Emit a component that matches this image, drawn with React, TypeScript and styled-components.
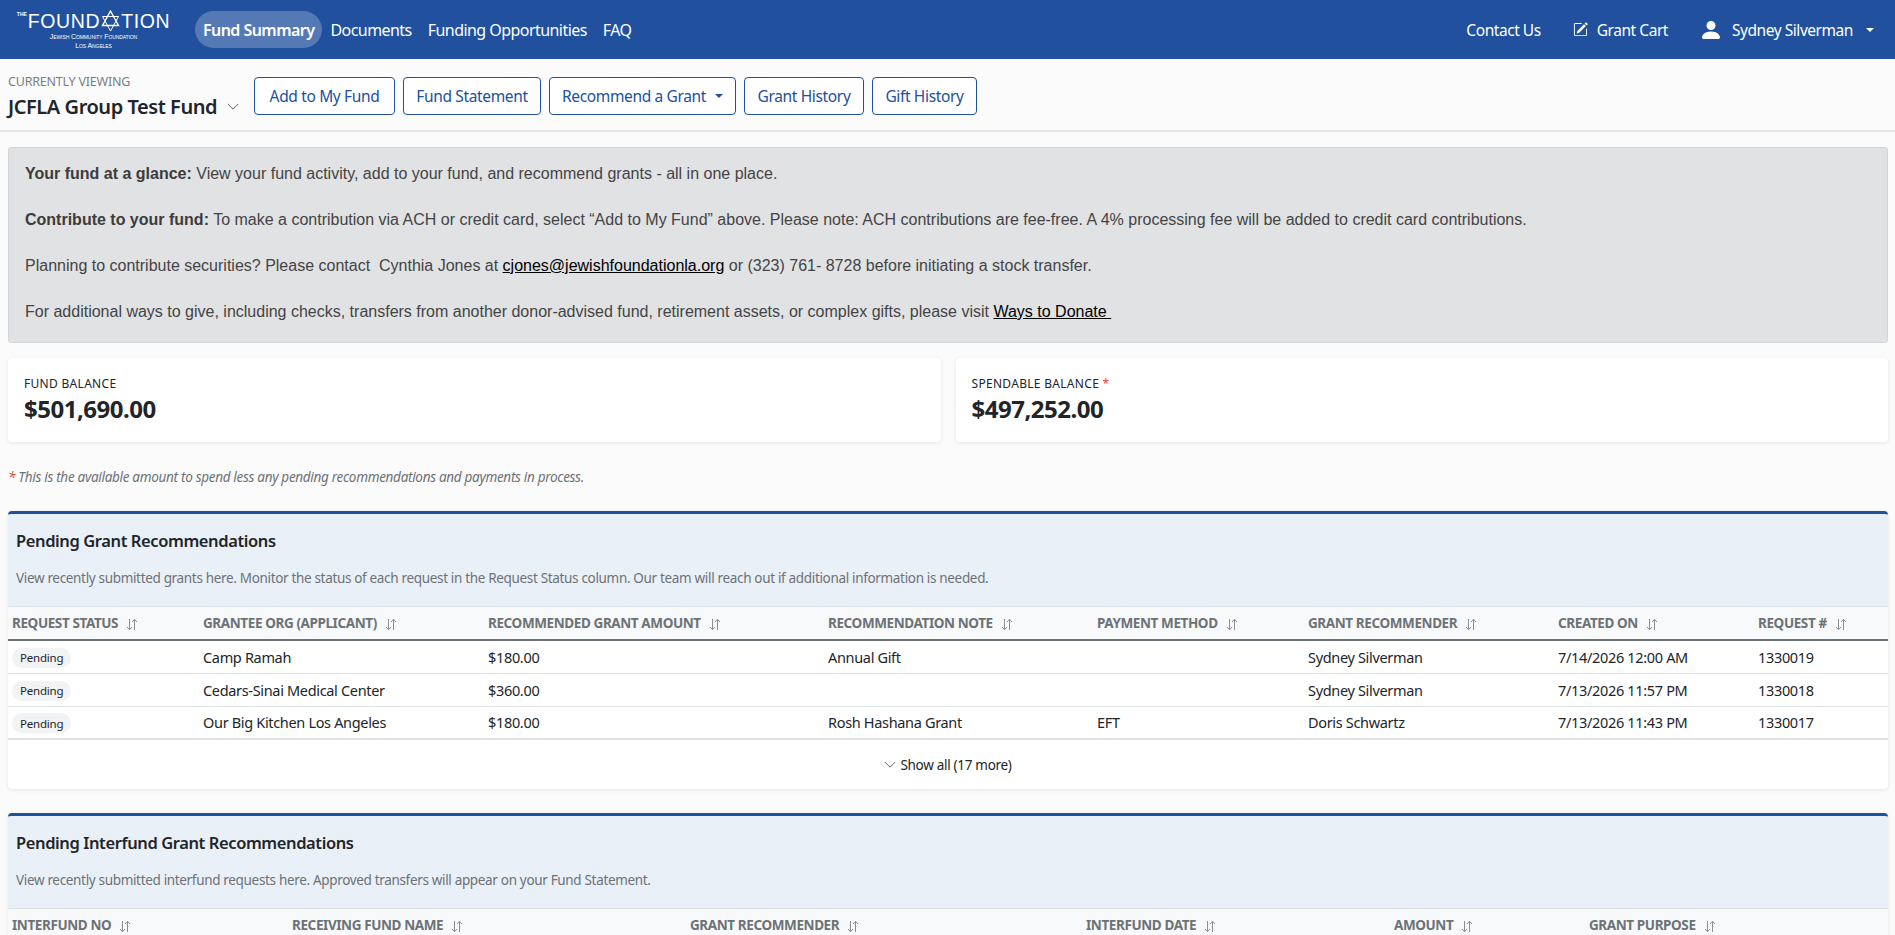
import React from "react";
import styled, { createGlobalStyle } from "styled-components";
import { BsPencilSquare, BsPersonFill } from "react-icons/bs";

const BLUE = "#20509e";
const UI_FONT = `"Noto Sans", "Open Sans", sans-serif`;

const GlobalStyle = createGlobalStyle`
  html, body {
    margin: 0;
    padding: 0;
    height: 100%;
    overflow: hidden;
    background: #fbfbfb;
    color: #212529;
    font-family: ${UI_FONT};
  }
  * { box-sizing: border-box; }
`;

const Page = styled.div`
  height: 935px;
  overflow: hidden;
`;

/* top nav */
const Header = styled.header`
  height: 59px;
  background: ${BLUE};
  display: flex;
  align-items: center;
  padding: 0 21px 0 15px;
  color: #fff;
`;
const Logo = styled.div`
  width: 157px;
  height: 50px;
  margin-right: 23px;
  display: flex;
  flex-direction: column;
  align-items: center;
  font-family: "Liberation Sans", sans-serif;
`;
const LogoMain = styled.div`
  display: flex;
  align-items: center;
  height: 22px;
  margin-top: 5px;
  font-size: 19.5px;
  letter-spacing: 0.6px;
  line-height: 22px;
  sup {
    font-size: 5px;
    font-weight: 700;
    align-self: flex-start;
    line-height: 8px;
    letter-spacing: 0;
    margin-right: 1px;
  }
`;
const LogoSub = styled.div`
  font-size: 7px;
  line-height: 9px;
  letter-spacing: -0.1px;
  font-variant: small-caps;
  &:first-of-type { margin-top: 5px; }
`;
const NavLink = styled.a<{ $active?: boolean }>`
  display: flex;
  align-items: center;
  height: 37px;
  padding: 0 ${({ $active }) => ($active ? "8px" : "8px")};
  border-radius: 19px;
  font-size: 16px;
  letter-spacing: -0.55px;
  white-space: nowrap;
  font-weight: ${({ $active }) => ($active ? 600 : 400)};
  background: ${({ $active }) => ($active ? "rgba(255,255,255,0.24)" : "transparent")};
`;
const Spacer = styled.div`
  flex: 1;
`;
const RightLink = styled.a<{ $gap: number }>`
  display: flex;
  align-items: center;
  gap: 9px;
  margin-left: ${({ $gap }) => $gap}px;
  font-size: 15.5px;
  letter-spacing: -0.45px;
  white-space: nowrap;
`;
const Caret = styled.span<{ $color?: string }>`
  display: inline-block;
  width: 0;
  height: 0;
  border-left: 4.5px solid transparent;
  border-right: 4.5px solid transparent;
  border-top: 4.5px solid ${({ $color }) => $color || "#fff"};
`;

/* fund bar */
const FundBar = styled.div`
  height: 73px;
  border-bottom: 2px solid #e4e5e6;
  display: flex;
  align-items: flex-start;
  padding: 0 8px;
`;
const FundPicker = styled.div`
  width: 246px;
  padding-top: 14px;
`;
const Viewing = styled.div`
  font-size: 12.5px;
  line-height: 17px;
  color: #7a7f85;
  letter-spacing: -0.2px;
`;
const FundName = styled.div`
  display: flex;
  align-items: center;
  gap: 10px;
  font-size: 20px;
  font-weight: 600;
  line-height: 28px;
  margin-top: 3px;
  letter-spacing: -0.45px;
  color: #212529;
`;
const Actions = styled.div`
  display: flex;
  gap: 8px;
  padding-top: 18px;
`;
const ActionButton = styled.button<{ $width: number }>`
  width: ${({ $width }) => $width}px;
  height: 38px;
  display: flex;
  align-items: center;
  justify-content: center;
  gap: 9px;
  background: #fff;
  border: 1px solid ${BLUE};
  border-radius: 4px;
  color: ${BLUE};
  font-family: ${UI_FONT};
  font-size: 15.5px;
  letter-spacing: -0.35px;
  white-space: nowrap;
  padding: 0;
`;

/* content */
const Content = styled.main`
  padding: 15px 7px 0 8px;
`;
const InfoPanel = styled.section`
  height: 196px;
  background: #e1e2e4;
  border: 1px solid #d3d5d8;
  border-radius: 3px;
  padding: 14px 16px 0;
  font-family: "Liberation Sans", Arial, sans-serif;
  font-size: 16px;
  color: #444;
  p {
    margin: 0 0 22px;
    line-height: 24px;
  }
  strong { font-weight: 700; color: #3c3c3c; }
  a { color: #000; text-decoration: underline; }
`;
const Cards = styled.div`
  display: grid;
  grid-template-columns: 1fr 1fr;
  gap: 15px;
  margin-top: 15px;
`;
const BalanceCard = styled.div`
  height: 84px;
  background: #fff;
  border-radius: 4px;
  box-shadow: 0 1px 4px rgba(0, 0, 0, 0.09);
  padding: 17px 16px;
`;
const CardLabel = styled.div`
  font-size: 12px;
  line-height: 17px;
  letter-spacing: 0.3px;
  color: #212529;
  span { color: #d9453b; }
`;
const CardValue = styled.div`
  font-size: 24px;
  line-height: 32px;
  margin-top: 1px;
  font-weight: 700;
  letter-spacing: -0.5px;
`;
const Footnote = styled.div`
  margin: 25px 0 0;
  font-size: 13.5px;
  line-height: 20px;
  font-style: italic;
  color: #6d7277;
  letter-spacing: -0.3px;
  span { color: #d9453b; }
`;
const TableCard = styled.section<{ $top: number }>`
  margin-top: ${({ $top }) => $top}px;
  background: #fff;
  border-radius: 4px;
  box-shadow: 0 1px 4px rgba(0, 0, 0, 0.09);
`;
const TableHeader = styled.div`
  height: 96px;
  background: #e9f0f8;
  border-top: 3px solid ${BLUE};
  border-radius: 4px 4px 0 0;
  padding: 14px 8px 0;
  border-bottom: 1px solid #dfe3e7;
`;
const TableTitle = styled.h2`
  margin: 0;
  font-size: 16.5px;
  line-height: 26px;
  font-weight: 600;
  letter-spacing: -0.4px;
  color: #212529;
`;
const TableDesc = styled.p`
  margin: 14px 0 0;
  font-size: 13.5px;
  line-height: 20px;
  letter-spacing: -0.33px;
  color: #6d7277;
`;
const Table = styled.table`
  width: 100%;
  table-layout: fixed;
  border-collapse: collapse;
`;
const HeadRow = styled.tr`
  height: 33px;
  background: #f7f9fa;
  border-bottom: 2px solid #6d7277;
`;
const HeadCell = styled.th`
  padding: 0 4px;
  text-align: left;
  font-size: 13.5px;
  font-weight: 700;
  color: #6d7277;
  letter-spacing: -0.4px;
  white-space: nowrap;
  svg {
    margin-left: 8px;
    vertical-align: -3px;
  }
`;
const BodyRow = styled.tr`
  height: 33px;
  border-bottom: 1px solid #dfe3e7;
  &:last-child { border-bottom: 2px solid #dfe3e7; }
`;
const Cell = styled.td`
  padding: 0 4px;
  font-size: 14.5px;
  letter-spacing: -0.33px;
  color: #212529;
  white-space: nowrap;
`;
const StatusChip = styled.span`
  display: inline-flex;
  align-items: center;
  height: 20px;
  padding: 0 8px;
  border-radius: 10px;
  background: #f1f3f5;
  font-size: 11.5px;
  letter-spacing: -0.2px;
  vertical-align: middle;
`;
const TableFooter = styled.div`
  height: 49px;
  display: flex;
  align-items: center;
  justify-content: center;
  gap: 4px;
  font-size: 13.5px;
  letter-spacing: -0.3px;
  color: #212529;
  padding-right: 0;
`;

const SortIcon = () => (
  <svg width="12" height="13" viewBox="0 0 12 13" fill="none" stroke="#8a8f94" strokeWidth="1">
    <path d="M3.5 1v10.5M1 9l2.5 2.7L6 9" />
    <path d="M8.5 12V1.5M6 4l2.5-2.7L11 4" />
  </svg>
);

const Chevron = ({ size }: { size: number }) => (
  <svg width={size} height={size * 0.6} viewBox="0 0 14 8" fill="none" stroke="#495057" strokeWidth="1">
    <path d="M1 1l6 6 6-6" />
  </svg>
);

const StarMark = () => (
  <svg width="21" height="22" viewBox="0 0 21 22" fill="none" stroke="#fff" strokeWidth="1.4">
    <path d="M10.5 1L18.5 15.5H2.5Z" />
    <path d="M10.5 21L2.5 6.5H18.5Z" strokeWidth="1" />
  </svg>
);

const pendingCols = [191, 285, 340, 269, 211, 250, 200, 134];
const pendingHeads = [
  "REQUEST STATUS",
  "GRANTEE ORG (APPLICANT)",
  "RECOMMENDED GRANT AMOUNT",
  "RECOMMENDATION NOTE",
  "PAYMENT METHOD",
  "GRANT RECOMMENDER",
  "CREATED ON",
  "REQUEST #",
];
const pendingRows = [
  ["Camp Ramah", "$180.00", "Annual Gift", "", "Sydney Silverman", "7/14/2026 12:00 AM", "1330019"],
  ["Cedars-Sinai Medical Center", "$360.00", "", "", "Sydney Silverman", "7/13/2026 11:57 PM", "1330018"],
  ["Our Big Kitchen Los Angeles", "$180.00", "Rosh Hashana Grant", "EFT", "Doris Schwartz", "7/13/2026 11:43 PM", "1330017"],
];
const interfundCols = [280, 398, 396, 308, 195, 303];
const interfundHeads = [
  "INTERFUND NO",
  "RECEIVING FUND NAME",
  "GRANT RECOMMENDER",
  "INTERFUND DATE",
  "AMOUNT",
  "GRANT PURPOSE",
];

const DataHead = ({ heads, cols }: { heads: string[]; cols: number[] }) => (
  <>
    <colgroup>
      {cols.map((w, i) => (
        <col key={i} width={w} />
      ))}
    </colgroup>
    <thead>
      <HeadRow>
        {heads.map((h) => (
          <HeadCell key={h}>
            {h}
            <SortIcon />
          </HeadCell>
        ))}
      </HeadRow>
    </thead>
  </>
);

export default function App() {
  return (
    <Page>
      <GlobalStyle />
      <Header>
        <Logo>
          <LogoMain>
            <sup>THE</sup>FOUND
            <StarMark />
            TION
          </LogoMain>
          <LogoSub>Jewish Community Foundation</LogoSub>
          <LogoSub>Los Angeles</LogoSub>
        </Logo>
        <NavLink $active>Fund Summary</NavLink>
        <NavLink>Documents</NavLink>
        <NavLink>Funding Opportunities</NavLink>
        <NavLink>FAQ</NavLink>
        <Spacer />
        <RightLink $gap={0}>Contact Us</RightLink>
        <RightLink $gap={32}>
          <BsPencilSquare size={15} />
          Grant Cart
        </RightLink>
        <RightLink $gap={31}>
          <BsPersonFill size={24} />
          Sydney Silverman
          <Caret style={{ marginLeft: 4 }} />
        </RightLink>
      </Header>
      <FundBar>
        <FundPicker>
          <Viewing>CURRENTLY VIEWING</Viewing>
          <FundName>
            JCFLA Group Test Fund
            <Chevron size={12} />
          </FundName>
        </FundPicker>
        <Actions>
          <ActionButton $width={141}>Add to My Fund</ActionButton>
          <ActionButton $width={138}>Fund Statement</ActionButton>
          <ActionButton $width={187}>
            Recommend a Grant
            <Caret $color={BLUE} />
          </ActionButton>
          <ActionButton $width={120}>Grant History</ActionButton>
          <ActionButton $width={105}>Gift History</ActionButton>
        </Actions>
      </FundBar>
      <Content>
        <InfoPanel>
          <p>
            <strong>Your fund at a glance:</strong> View your fund activity, add to your fund, and recommend grants - all in one place.
          </p>
          <p>
            <strong>Contribute to your fund:</strong> To make a contribution via ACH or credit card, select “Add to My Fund” above. Please note: ACH contributions are fee-free. A 4% processing fee will be added to credit card contributions.
          </p>
          <p>
            Planning to contribute securities? Please contact&nbsp; Cynthia Jones at <a>cjones@jewishfoundationla.org</a> or (323) 761- 8728 before initiating a stock transfer.
          </p>
          <p>
            For additional ways to give, including checks, transfers from another donor-advised fund, retirement assets, or complex gifts, please visit <a>Ways to Donate&nbsp;</a>
          </p>
        </InfoPanel>
        <Cards>
          <BalanceCard>
            <CardLabel>FUND BALANCE</CardLabel>
            <CardValue>$501,690.00</CardValue>
          </BalanceCard>
          <BalanceCard>
            <CardLabel>
              SPENDABLE BALANCE <span>*</span>
            </CardLabel>
            <CardValue>$497,252.00</CardValue>
          </BalanceCard>
        </Cards>
        <Footnote>
          <span>*</span> This is the available amount to spend less any pending recommendations and payments in process.
        </Footnote>
        <TableCard $top={24}>
          <TableHeader>
            <TableTitle>Pending Grant Recommendations</TableTitle>
            <TableDesc>
              View recently submitted grants here. Monitor the status of each request in the Request Status column. Our team will reach out if additional information is needed.
            </TableDesc>
          </TableHeader>
          <Table>
            <DataHead heads={pendingHeads} cols={pendingCols} />
            <tbody>
              {pendingRows.map((row) => (
                <BodyRow key={row[6]}>
                  <Cell>
                    <StatusChip>Pending</StatusChip>
                  </Cell>
                  {row.map((v, i) => (
                    <Cell key={i}>{v}</Cell>
                  ))}
                </BodyRow>
              ))}
            </tbody>
          </Table>
          <TableFooter>
            <Chevron size={12} />
            Show all (17 more)
          </TableFooter>
        </TableCard>
        <TableCard $top={24}>
          <TableHeader>
            <TableTitle>Pending Interfund Grant Recommendations</TableTitle>
            <TableDesc>
              View recently submitted interfund requests here. Approved transfers will appear on your Fund Statement.
            </TableDesc>
          </TableHeader>
          <Table>
            <DataHead heads={interfundHeads} cols={interfundCols} />
          </Table>
        </TableCard>
      </Content>
    </Page>
  );
}
